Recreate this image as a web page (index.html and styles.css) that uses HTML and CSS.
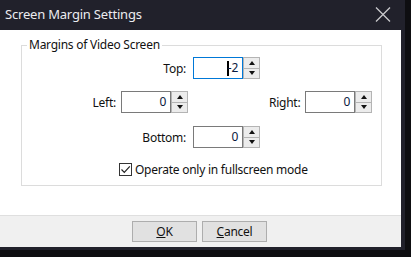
FILE: index.html
```html
<!DOCTYPE html>
<html>
<head>
    <title>Screen Margin Settings</title>
    <link rel="stylesheet" href="styles.css">
</head>
<body>
    <div class="window">
        <div class="titlebar">
            <span class="title">Screen Margin Settings</span>
            <svg class="close" width="16" height="15" viewBox="0 0 16 15">
                <path d="M1 0.5 L15 14.5 M15 0.5 L1 14.5" stroke="#c9c9cc" stroke-width="1.3" fill="none"/>
            </svg>
        </div>
        <div class="client">
            <fieldset class="group">
                <legend>Margins of Video Screen</legend>

                <div class="row row-center">
                    <label class="field-label wide">Top:</label>
                    <div class="spin">
                        <div class="spin-input focused"><span class="caret"></span>-2</div>
                        <div class="spin-btns">
                            <span class="spin-btn"><i class="tri up"></i></span>
                            <span class="spin-btn"><i class="tri down"></i></span>
                        </div>
                    </div>
                </div>

                <div class="row row-sides">
                    <label class="field-label left-label">Left:</label>
                    <div class="spin">
                        <div class="spin-input">0</div>
                        <div class="spin-btns">
                            <span class="spin-btn"><i class="tri up"></i></span>
                            <span class="spin-btn"><i class="tri down"></i></span>
                        </div>
                    </div>
                    <label class="field-label right-label">Right:</label>
                    <div class="spin">
                        <div class="spin-input">0</div>
                        <div class="spin-btns">
                            <span class="spin-btn"><i class="tri up"></i></span>
                            <span class="spin-btn"><i class="tri down"></i></span>
                        </div>
                    </div>
                </div>

                <div class="row row-center">
                    <label class="field-label wide">Bottom:</label>
                    <div class="spin">
                        <div class="spin-input">0</div>
                        <div class="spin-btns">
                            <span class="spin-btn"><i class="tri up"></i></span>
                            <span class="spin-btn"><i class="tri down"></i></span>
                        </div>
                    </div>
                </div>

                <div class="row row-check">
                    <span class="checkbox">
                        <svg width="11" height="11" viewBox="0 0 11 11">
                            <path d="M1.5 5.5 L4.3 8.3 L9.8 2.3" stroke="#222" stroke-width="1.2" fill="none"/>
                        </svg>
                    </span>
                    <span>Operate only in fullscreen mode</span>
                </div>
            </fieldset>

            <div class="footer">
                <button class="btn"><u>O</u>K</button>
                <button class="btn"><u>C</u>ancel</button>
            </div>
        </div>
    </div>
</body>
</html>
```

FILE: styles.css
```css
body {
    margin: 0;
    background-color: #0e0e11;
    font-family: "Noto Sans", "Open Sans", sans-serif;
    font-size: 12px;
    letter-spacing: -0.25px;
    color: #111;
}
.window {
    width: 405px;
    height: 250px;
    background-color: #21212b;
    display: flex;
    flex-direction: column;
}
.titlebar {
    height: 30px;
    display: flex;
    align-items: center;
    justify-content: space-between;
    padding: 0 14px 0 5px;
}
.title {
    color: #ececf0;
    font-size: 13px;
    letter-spacing: -0.2px;
    margin-top: -3px;
}
.close {
    margin-top: -2px;
}
.client {
    width: 401px;
    height: 217px;
    background: white;
    display: flex;
    flex-direction: column;
}
.group {
    margin: 7px 0 0 21px;
    width: 361px;
    box-sizing: border-box;
    border: 1px solid #dcdcdc;
    padding: 4px 0 8px 0;
    min-width: 0;
}
.group legend {
    padding: 0 2px;
    margin-left: 5px;
    line-height: 16px;
}
.row {
    display: flex;
    align-items: center;
}
.row-center {
    padding-left: 118px;
}
.row-sides {
    padding-left: 64px;
    margin-top: 12px;
}
.row-center + .row-sides + .row-center {
    margin-top: 13px;
}
.row-check {
    padding-left: 97px;
    margin-top: 13px;
    height: 16px;
}
.field-label {
    text-align: right;
    margin-right: 7px;
}
.wide {
    width: 46px;
}
.left-label {
    width: 30px;
    margin-right: 5px;
}
.right-label {
    width: 31px;
    margin-left: 81px;
    margin-right: 5px;
}
.spin {
    display: flex;
    height: 22px;
}
.spin-input {
    width: 50px;
    box-sizing: border-box;
    border: 1px solid #7a7a7a;
    text-align: right;
    padding-right: 4px;
    line-height: 20px;
    color: #0a1a40;
}
.spin-input.focused {
    border-color: #0078d7;
}
.caret {
    display: inline-block;
    width: 2px;
    height: 15px;
    background: #000;
    vertical-align: middle;
    margin-right: -1px;
}
.spin-btns {
    width: 17px;
    display: flex;
    flex-direction: column;
}
.spin-btn {
    flex: 1;
    border: 1px solid #b4b4b4;
    background: #ececec;
    display: flex;
    align-items: center;
    justify-content: center;
}
.spin-btn + .spin-btn {
    border-top: none;
}
.tri {
    width: 0;
    height: 0;
    border-left: 3.5px solid transparent;
    border-right: 3.5px solid transparent;
}
.tri.up {
    border-bottom: 4px solid #111;
}
.tri.down {
    border-top: 4px solid #111;
}
.checkbox {
    width: 13px;
    height: 13px;
    box-sizing: border-box;
    border: 1px solid #333;
    display: flex;
    align-items: center;
    justify-content: center;
    margin-right: 3px;
}
.footer {
    margin-top: auto;
    height: 32px;
    box-sizing: border-box;
    border-top: 1px solid #dfdfdf;
    background: #f0f0f0;
    display: flex;
    gap: 5px;
    padding: 5px 0 0 132px;
}
.btn {
    width: 65px;
    height: 21px;
    border: 1px solid #adadad;
    background: #e1e1e1;
    font-family: inherit;
    font-size: 12px;
    letter-spacing: inherit;
    color: #111;
    padding: 0;
}
```
